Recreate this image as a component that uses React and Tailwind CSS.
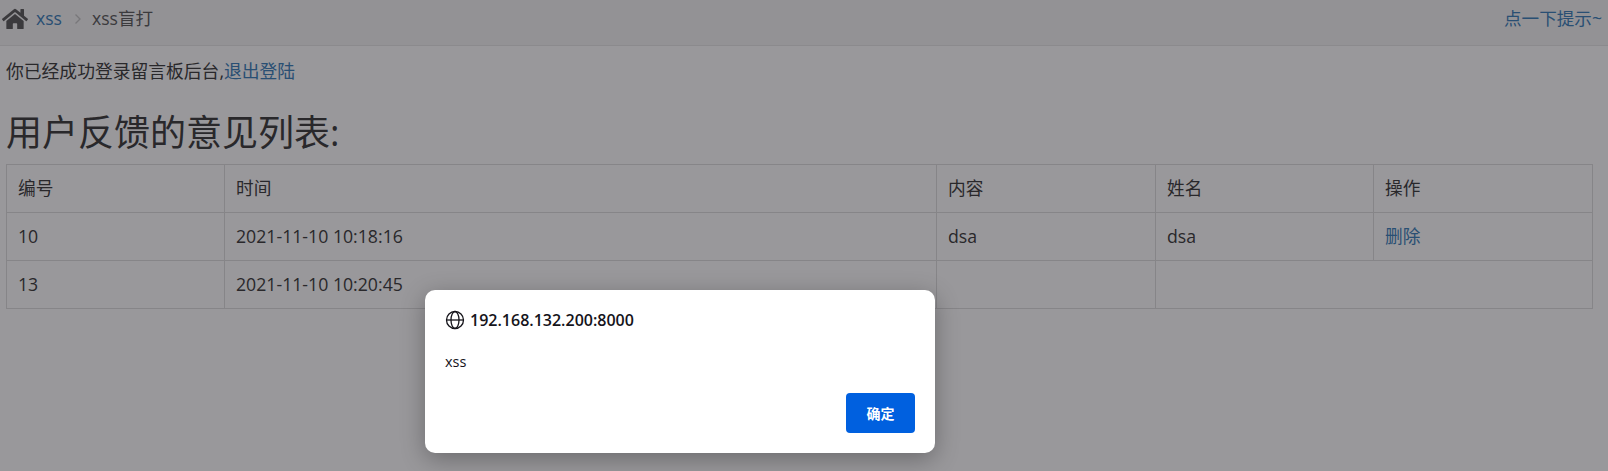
import React from 'react';
import { FaHome } from 'react-icons/fa';

const Cell = ({ children, colSpan, link }) => (
    <td colSpan={colSpan} className={`border border-[#ddd] px-[11px] align-middle h-12 text-[17.7px] ${link ? 'text-[#337ab7]' : ''}`}>
        {children}
    </td>
);

const App = () => {
    return (
        <div className="relative h-[471px] w-[1608px] overflow-hidden bg-white text-[#333] font-['Open_Sans','Noto_Sans_CJK_SC',sans-serif]">
            <div className="flex h-[46px] items-start justify-between border-b border-[#e5e5e5] bg-[#f5f5f5] pr-[6px] text-[17.6px]">
                <div className="flex items-center h-[37px] pl-[2px]">
                    <FaHome className="w-[26px] h-[26px] text-[#555]" />
                    <a className="ml-[8px] text-[#337ab7]">xss</a>
                    <span className="ml-[12px] mr-[10px]">
                        <svg width="8" height="12" viewBox="0 0 8 12" fill="none" stroke="#c4c4c4" strokeWidth="1.4"><path d="M1.5 1.5 6 6l-4.5 4.5" /></svg>
                    </span>
                    <span className="text-[#555]">xss盲打</span>
                </div>
                <a className="leading-[37px] text-[#337ab7]">点一下提示~</a>
            </div>

            <div className="px-[6px]">
                <p className="mt-[13px] text-[17.8px] leading-[24px]">
                    你已经成功登录留言板后台,<a className="text-[#337ab7]">退出登陆</a>
                </p>
                <h2 className="mt-[30px] text-[36px] leading-[40px] font-normal">用户反馈的意见列表:</h2>
                <table className="mt-[11px] w-[1586px] table-fixed border-collapse">
                    <colgroup>
                        <col className="w-[218px]" />
                        <col className="w-[712px]" />
                        <col className="w-[219px]" />
                        <col className="w-[218px]" />
                        <col className="w-[219px]" />
                    </colgroup>
                    <tbody>
                        <tr>
                            <Cell>编号</Cell>
                            <Cell>时间</Cell>
                            <Cell>内容</Cell>
                            <Cell>姓名</Cell>
                            <Cell>操作</Cell>
                        </tr>
                        <tr>
                            <Cell>10</Cell>
                            <Cell>2021-11-10 10:18:16</Cell>
                            <Cell>dsa</Cell>
                            <Cell>dsa</Cell>
                            <Cell link>删除</Cell>
                        </tr>
                        <tr>
                            <Cell>13</Cell>
                            <Cell>2021-11-10 10:20:45</Cell>
                            <Cell></Cell>
                            <Cell colSpan={2}></Cell>
                        </tr>
                    </tbody>
                </table>
            </div>

            {/* browser alert over the page */}
            <div className="absolute inset-0 bg-[rgba(28,27,34,0.45)]">
                <div className="absolute left-[425px] top-[290px] flex h-[163px] w-[510px] flex-col rounded-[10px] bg-white pl-[20px] pr-[20px] pt-[20px] text-[#15141a] shadow-[0_6px_24px_rgba(0,0,0,0.3)]">
                    <div className="flex items-center gap-[5px] h-[20px] text-[16px] font-semibold leading-[20px]">
                        <svg width="20" height="20" viewBox="0 0 20 20" fill="none" stroke="#15141a" strokeWidth="1.3">
                            <circle cx="10" cy="10" r="8.5" />
                            <ellipse cx="10" cy="10" rx="4" ry="8.5" />
                            <path d="M1.5 10h17" />
                        </svg>
                        <span>192.168.132.200:8000</span>
                    </div>
                    <p className="mt-[22px] text-[14.5px] leading-[20px]">xss</p>
                    <div className="mt-[21px] flex justify-end">
                        <button className="h-[40px] w-[69px] rounded-[4px] bg-[#0060df] text-[14px] font-semibold text-white">确定</button>
                    </div>
                </div>
            </div>
        </div>
    );
};

export default App;
